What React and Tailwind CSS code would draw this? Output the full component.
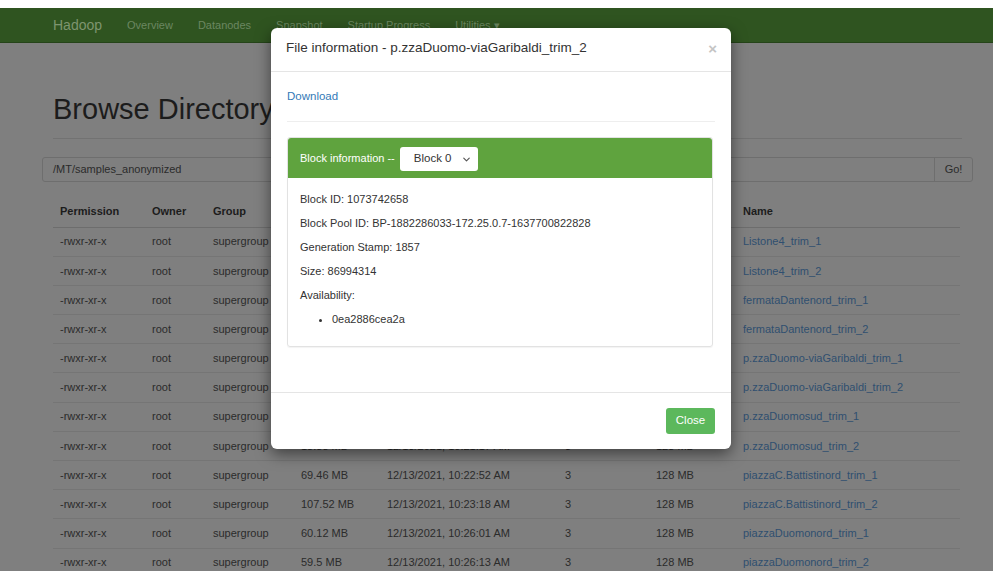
import React from 'react';
import { ChevronDown } from 'lucide-react';

const navLinks = ['Overview', 'Datanodes', 'Snapshot', 'Startup Progress'];

const files = [
  ['75.31 MB', '12/13/2021, 10:12:05 AM', 'Listone4_trim_1'],
  ['81.02 MB', '12/13/2021, 10:12:40 AM', 'Listone4_trim_2'],
  ['64.77 MB', '12/13/2021, 10:14:22 AM', 'fermataDantenord_trim_1'],
  ['70.15 MB', '12/13/2021, 10:15:03 AM', 'fermataDantenord_trim_2'],
  ['92.40 MB', '12/13/2021, 10:17:31 AM', 'p.zzaDuomo-viaGaribaldi_trim_1'],
  ['82.96 MB', '12/13/2021, 10:18:12 AM', 'p.zzaDuomo-viaGaribaldi_trim_2'],
  ['58.23 MB', '12/13/2021, 10:20:44 AM', 'p.zzaDuomosud_trim_1'],
  ['18.88 MB', '12/13/2021, 10:21:17 AM', 'p.zzaDuomosud_trim_2'],
  ['69.46 MB', '12/13/2021, 10:22:52 AM', 'piazzaC.Battistinord_trim_1'],
  ['107.52 MB', '12/13/2021, 10:23:18 AM', 'piazzaC.Battistinord_trim_2'],
  ['60.12 MB', '12/13/2021, 10:26:01 AM', 'piazzaDuomonord_trim_1'],
  ['59.5 MB', '12/13/2021, 10:26:13 AM', 'piazzaDuomonord_trim_2'],
];

const blockInfo = [
  'Block ID: 1073742658',
  'Block Pool ID: BP-1882286033-172.25.0.7-1637700822828',
  'Generation Stamp: 1857',
  'Size: 86994314',
];

function FileModal() {
  return (
    <div className="absolute left-[271px] top-[28px] w-[460px] h-[421px] bg-white rounded-[6px] shadow-[0_5px_15px_rgba(0,0,0,0.5)] flex flex-col">
      <div className="h-[44px] border-b border-[#e5e5e5] flex items-center justify-between pl-[15px] pr-[14px] pb-[3px]">
        <h4 className="text-[13.5px] text-[#333]">File information - p.zzaDuomo-viaGaribaldi_trim_2</h4>
        <span className="text-[15px] font-bold text-[#c4c4c4] leading-none">×</span>
      </div>

      <div className="flex-1 px-[16px] pt-[16px]">
        <a className="block text-[11.5px] leading-[16px] text-[#337ab7]">Download</a>
        <hr className="mt-[17px] border-t border-[#eee]" />

        <div className="mt-[15px] mr-[2px] border border-[#e2e2e2] rounded-[3px] shadow-[0_1px_1px_rgba(0,0,0,0.05)]">
          <div className="h-[40px] bg-[#5fa33e] rounded-t-[3px] flex items-center pl-[12px] text-white text-[11px]">
            <span>Block information --</span>
            <div className="ml-[5px] mt-[2px] w-[78px] h-[24px] bg-white rounded-[3px] flex items-center justify-between pl-[14px] pr-[6px] text-[#333] text-[11.5px]">
              <span>Block 0</span>
              <ChevronDown size={11} strokeWidth={2.5} className="text-[#555]" />
            </div>
          </div>
          <div className="pl-[12px] pt-[9px] pb-[15px] text-[11px] text-[#333]">
            {blockInfo.map((line) => (
              <p key={line} className="leading-[24px]">{line}</p>
            ))}
            <p className="leading-[24px]">Availability:</p>
            <ul className="pl-[32px] list-disc">
              <li className="leading-[24px]">0ea2886cea2a</li>
            </ul>
          </div>
        </div>
      </div>

      <div className="border-t border-[#e5e5e5] pt-[15px] pb-[15px] pr-[16px] flex justify-end">
        <button className="w-[49px] h-[26px] bg-[#5cb85c] rounded-[3px] text-white text-[11.5px]">Close</button>
      </div>
    </div>
  );
}

export default function App() {
  return (
    <div className="relative w-[993px] h-[571px] overflow-hidden bg-[#7f7f7f] font-['Liberation_Sans',Arial,sans-serif]">
      <div className="h-[8px] bg-white" />
      <nav className="h-[35px] bg-[#2f5420] border-b border-[#254419] flex items-center pl-[53px]">
        <span className="text-[14px] text-[#7e956f] mr-[25px]">Hadoop</span>
        <ul className="flex gap-[25px] text-[11px] text-[#6b8760]">
          {navLinks.map((n) => (
            <li key={n}>{n}</li>
          ))}
          <li>Utilities ▾</li>
        </ul>
      </nav>

      <main className="pl-[42px] w-[973px]">
        <h1 className="mt-[50px] ml-[11px] text-[29px] leading-[32px] text-[#1c1c1c]">Browse Directory</h1>
        <hr className="mt-[13px] mx-[11px] border-t border-[#727272]" />

        <div className="mt-[18px] h-[25px] flex border border-[#6e6e6e] rounded-[3px] text-[11px] text-[#2b2b2b]">
          <div className="flex-1 flex items-center pl-[10px]">/MT/samples_anonymized</div>
          <div className="w-[38px] border-l border-[#6e6e6e] flex items-center justify-center">Go!</div>
        </div>

        <table className="mt-[14px] ml-[11px] w-[907px] text-[11px] text-[#2b2b2b] border-collapse">
          <thead>
            <tr className="h-[31px] border-b border-[#6d6d6d] text-left text-[#1c1c1c]">
              <th className="w-[92px] pl-[7px] font-bold">Permission</th>
              <th className="w-[61px] pl-[7px] font-bold">Owner</th>
              <th className="w-[88px] pl-[7px] font-bold">Group</th>
              <th className="w-[86px] pl-[7px] font-bold">Size</th>
              <th className="w-[178px] pl-[7px] font-bold">Last Modified</th>
              <th className="w-[91px] pl-[7px] font-bold">Replication</th>
              <th className="w-[87px] pl-[7px] font-bold">Block Size</th>
              <th className="pl-[7px] font-bold">Name</th>
            </tr>
          </thead>
          <tbody>
            {files.map(([size, date, name]) => (
              <tr key={name} className="h-[29.2px] border-b border-[#757575]">
                <td className="pl-[7px]">-rwxr-xr-x</td>
                <td className="pl-[7px]">root</td>
                <td className="pl-[7px]">supergroup</td>
                <td className="pl-[7px]">{size}</td>
                <td className="pl-[7px]">{date}</td>
                <td className="pl-[7px]">3</td>
                <td className="pl-[7px]">128 MB</td>
                <td className="pl-[7px] text-[#2f4f70]">{name}</td>
              </tr>
            ))}
          </tbody>
        </table>
      </main>

      <FileModal />
    </div>
  );
}
